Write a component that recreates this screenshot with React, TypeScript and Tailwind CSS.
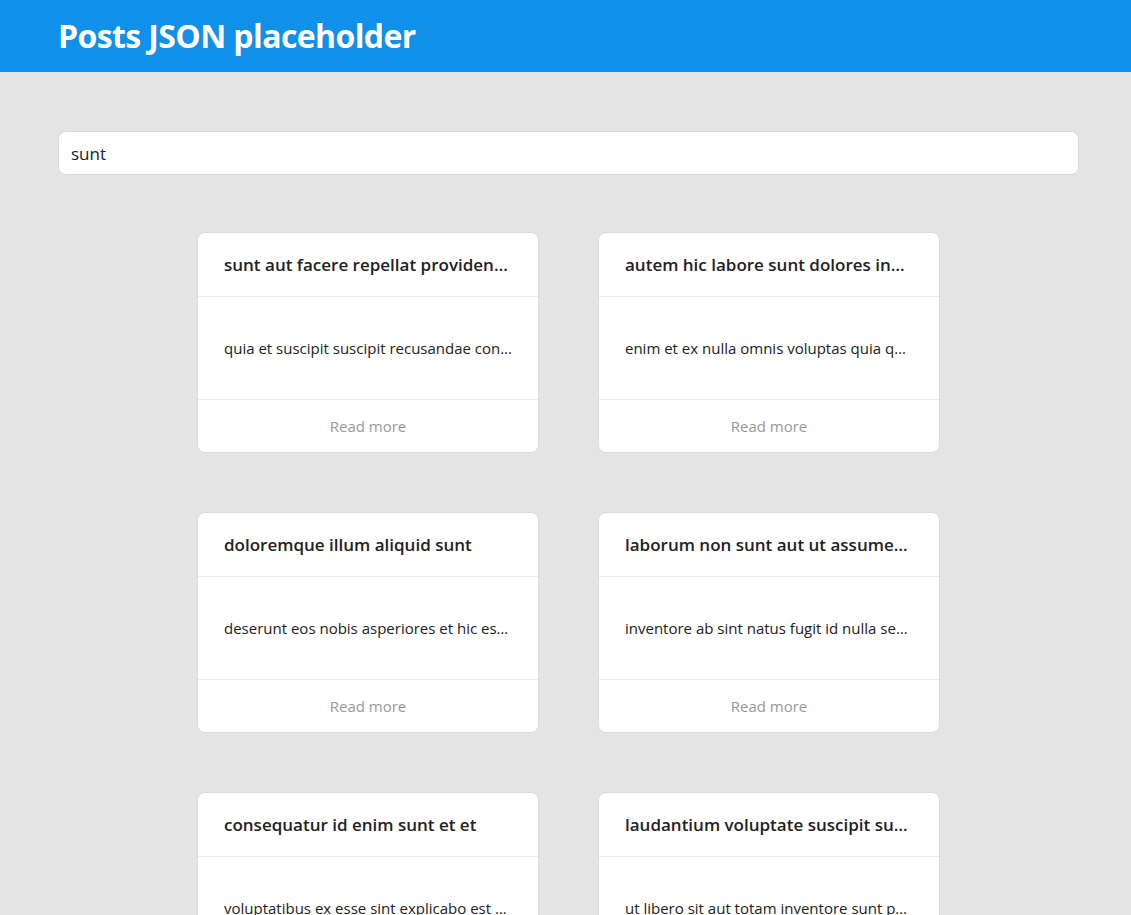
const posts = [
  {
    id: 1,
    title: "sunt aut facere repellat provident occaecati excepturi optio reprehenderit",
    body: "quia et suscipit suscipit recusandae consequuntur expedita et cum reprehenderit molestiae ut ut quas totam",
  },
  {
    id: 2,
    title: "autem hic labore sunt dolores incidunt",
    body: "enim et ex nulla omnis voluptas quia qui voluptatem consequatur numquam aliquam sunt",
  },
  {
    id: 3,
    title: "doloremque illum aliquid sunt",
    body: "deserunt eos nobis asperiores et hic est debitis repellat molestiae optio",
  },
  {
    id: 4,
    title: "laborum non sunt aut ut assumenda perspiciatis voluptas",
    body: "inventore ab sint natus fugit id nulla sequi architecto nihil quaerat eos tenetur",
  },
  {
    id: 5,
    title: "consequatur id enim sunt et et",
    body: "voluptatibus ex esse sint explicabo est aliquid cumque adipisci fuga repellat labore",
  },
  {
    id: 6,
    title: "laudantium voluptate suscipit sunt enim enim",
    body: "ut libero sit aut totam inventore sunt porro sint qui sunt molestiae consequatur",
  },
];

function PostCard({ title, body }: { title: string; body: string }) {
  return (
    <div className="w-[342px] bg-white border border-[#dcdcdc] rounded-lg flex flex-col">
      <div className="h-[64px] px-[26px] flex items-center border-b border-[#ececec]">
        <h2 className="truncate text-[17px] font-semibold text-[#222]">{title}</h2>
      </div>
      <div className="h-[103px] px-[26px] flex items-center border-b border-[#ececec]">
        <p className="truncate text-[15px] text-[#222]">{body}</p>
      </div>
      <div className="h-[52px] flex items-center justify-center">
        <span className="text-[15px] text-[#999]">Read more</span>
      </div>
    </div>
  );
}

export default function App() {
  return (
    <div className="min-h-screen bg-[#e4e4e4] font-['Open_Sans',sans-serif]">
      <header className="h-[72px] bg-[#1190e9] flex items-center px-[58px]">
        <h1 className="text-white text-[32px] font-bold tracking-[-0.6px]">Posts JSON placeholder</h1>
      </header>
      <main className="pl-[58px] pr-[52px] pt-[59px] pb-10">
        <input
          className="w-full h-[44px] bg-white border border-[#dadada] rounded-lg px-[12px] text-[17px] text-[#222] outline-none"
          defaultValue="sunt"
        />
        <div className="mt-[57px] grid grid-cols-[342px_342px] justify-center gap-x-[59px] gap-y-[59px]">
          {posts.map((p) => (
            <PostCard key={p.id} title={p.title} body={p.body} />
          ))}
        </div>
      </main>
    </div>
  );
}
